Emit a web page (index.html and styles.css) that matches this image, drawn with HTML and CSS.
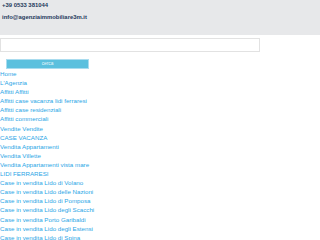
FILE: index.html
```html
<!DOCTYPE html>
<html>
<head>
<meta charset="utf-8">
<link rel="stylesheet" href="styles.css">
</head>
<body>
<header class="top">
  <div class="contact">+39 0533 381044</div>
  <div class="contact">info@agenziaimmobiliare3m.it</div>
</header>
<form class="search">
  <input class="field" type="text">
  <button class="btn" type="button">cerca</button>
</form>
<ul class="menu">
  <li><a href="#">Home</a></li>
  <li><a href="#">L'Agenzia</a></li>
  <li><a href="#">Affitti Affitti</a></li>
  <li><a href="#">Affitti case vacanza lidi ferraresi</a></li>
  <li><a href="#">Affitti case residenziali</a></li>
  <li><a href="#">Affitti commerciali</a></li>
  <li><a href="#">Vendite Vendite</a></li>
  <li><a href="#">CASE VACANZA</a></li>
  <li><a href="#">Vendita Appartamenti</a></li>
  <li><a href="#">Vendita Villette</a></li>
  <li><a href="#">Vendita Appartamenti vista mare</a></li>
  <li><a href="#">LIDI FERRARESI</a></li>
  <li><a href="#">Case in vendita Lido di Volano</a></li>
  <li><a href="#">Case in vendita Lido delle Nazioni</a></li>
  <li><a href="#">Case in vendita Lido di Pomposa</a></li>
  <li><a href="#">Case in vendita Lido degli Scacchi</a></li>
  <li><a href="#">Case in vendita Porto Garibaldi</a></li>
  <li><a href="#">Case in vendita Lido degli Estensi</a></li>
  <li><a href="#">Case in vendita Lido di Spina</a></li>
</ul>
</body>
</html>
```
FILE: styles.css
```css
html, body {
  margin: 0;
  padding: 0;
  background: #ffffff;
  font-family: "Liberation Sans", Arial, sans-serif;
}
.top {
  background: #e7e8ea;
  height: 35px;
  padding: 0 2px;
  box-sizing: border-box;
}
.contact {
  font-size: 5.9px;
  font-weight: bold;
  line-height: 11.6px;
  color: #24385b;
}
.search {
  margin: 0;
  padding-top: 3px;
  display: flex;
  flex-direction: column;
}
.field {
  display: block;
  width: 260px;
  height: 14px;
  box-sizing: border-box;
  margin: 0;
  border: 1px solid #e2e2e2;
  background: #fff;
  padding: 0;
}
.btn {
  display: block;
  margin: 7px 0 0 6px;
  width: 83px;
  height: 10px;
  box-sizing: border-box;
  padding: 0;
  border: 1px solid #a9dcef;
  background: #5bc0de;
  color: #e8f6fb;
  font-family: "Liberation Sans", Arial, sans-serif;
  font-size: 4.8px;
  line-height: 8px;
}
.menu {
  list-style: none;
  margin: 0;
  padding: 0;
}
.menu li {
  font-size: 6.2px;
  line-height: 9.1px;
}
.menu a {
  color: #2aa6e6;
  text-decoration: none;
}
```
